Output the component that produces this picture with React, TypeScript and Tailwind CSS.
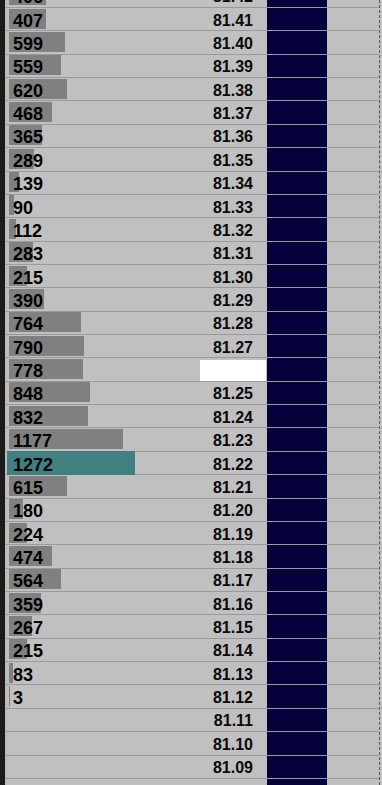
import React from "react";

type Level = { price: string; vol: number | null; hot?: boolean; blank?: boolean };

const levels: Level[] = [
  { price: "81.42", vol: 406 },
  { price: "81.41", vol: 407 },
  { price: "81.40", vol: 599 },
  { price: "81.39", vol: 559 },
  { price: "81.38", vol: 620 },
  { price: "81.37", vol: 468 },
  { price: "81.36", vol: 365 },
  { price: "81.35", vol: 289 },
  { price: "81.34", vol: 139 },
  { price: "81.33", vol: 90 },
  { price: "81.32", vol: 112 },
  { price: "81.31", vol: 283 },
  { price: "81.30", vol: 215 },
  { price: "81.29", vol: 390 },
  { price: "81.28", vol: 764 },
  { price: "81.27", vol: 790 },
  { price: "81.26", vol: 778, blank: true },
  { price: "81.25", vol: 848 },
  { price: "81.24", vol: 832 },
  { price: "81.23", vol: 1177 },
  { price: "81.22", vol: 1272, hot: true },
  { price: "81.21", vol: 615 },
  { price: "81.20", vol: 180 },
  { price: "81.19", vol: 224 },
  { price: "81.18", vol: 474 },
  { price: "81.17", vol: 564 },
  { price: "81.16", vol: 359 },
  { price: "81.15", vol: 267 },
  { price: "81.14", vol: 215 },
  { price: "81.13", vol: 83 },
  { price: "81.12", vol: 3 },
  { price: "81.11", vol: null },
  { price: "81.10", vol: null },
  { price: "81.09", vol: null },
  { price: "81.08", vol: null },
];

function barWidth(v: number) {
  return Math.max(1, Math.round(v / 10 - 4));
}

function LadderRow({ level }: { level: Level }) {
  return (
    <div className="flex h-[23.36px] shrink-0 border-t border-[#9a9a9a]">
      {/* volume profile */}
      <div className="relative flex w-[194px] items-center">
        {level.vol !== null &&
          (level.hot ? (
            <div className="absolute left-[1px] top-[-1px] bottom-[-1px] w-[128px] bg-[#408080]" />
          ) : (
            <div
              className="absolute left-[3px] top-[0.6px] h-[20px] bg-[#808080]"
              style={{ width: barWidth(level.vol) }}
            />
          ))}
        {level.vol !== null && (
          <span className="relative pl-[7px] pt-[3px] text-[18px] leading-none text-black">
            {level.vol}
          </span>
        )}
      </div>

      {/* price */}
      <div className="flex w-[66px] flex-col">
        {level.blank ? (
          <div className="mt-[1.6px] flex-1 bg-white" />
        ) : (
          <div className="flex flex-1 items-center justify-end pr-[13px] pt-[3px] text-[16px] leading-none text-[#0a0a0a]">
            {level.price}
          </div>
        )}
      </div>

      <div className="w-px" />
      {/* bid/ask column */}
      <div className="w-[60px] bg-[#03003c]" />
      <div className="flex-1" />
    </div>
  );
}

export default function App() {
  return (
    <div className="flex h-[785px] w-[382px] overflow-hidden bg-[#c0c0c0] font-['Liberation_Sans',Arial,sans-serif] font-bold">
      <div className="w-[5px] shrink-0 bg-[#1d1b19]" />
      <div className="w-px shrink-0 bg-[#b4b4b4]" />
      <div className="flex flex-1 flex-col">
        <div className="mt-[-16.36px] flex flex-col">
          {levels.map((l) => (
            <LadderRow key={l.price} level={l} />
          ))}
        </div>
      </div>
      <div className="w-px shrink-0 border-l border-dashed border-[#5a5a5a]" />
      <div className="w-[2px] shrink-0" />
    </div>
  );
}
